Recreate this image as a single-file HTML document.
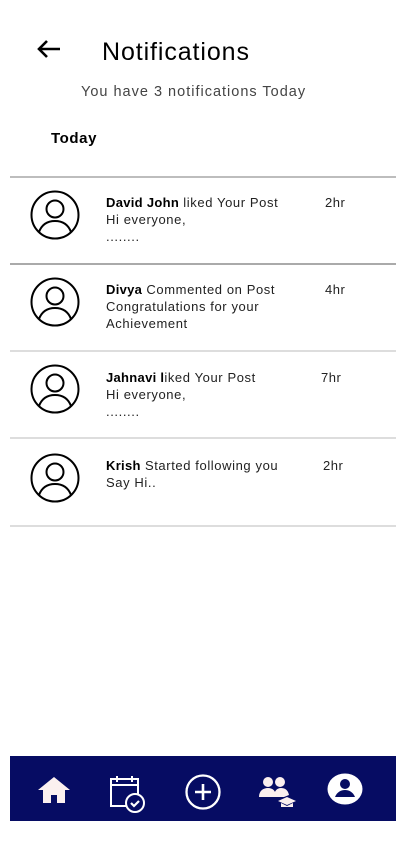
<!DOCTYPE html>
<html><head><meta charset="utf-8"><style>
*{margin:0;padding:0;box-sizing:border-box}
body{width:405px;height:849px;background:#fff;position:relative;font-family:"Liberation Sans",sans-serif;color:#111;overflow:hidden}
.a{position:absolute}
.hr{position:absolute;left:10px;width:386px;height:2px;background:#bdbdbd}
.t{position:absolute;left:106px;font-size:13px;line-height:17px;color:#222;white-space:nowrap;letter-spacing:0.6px}
.t b{color:#000;letter-spacing:0.3px}
.tm{position:absolute;font-size:13px;line-height:17px;color:#222;letter-spacing:0.5px}
.av{position:absolute;left:30px;width:50px;height:50px}
</style></head><body>
<svg class="a" style="left:36px;top:38px" width="26" height="22" viewBox="0 0 26 22"><path d="M24 11H3M11 3L3 11L11 19" fill="none" stroke="#000" stroke-width="2.6"/></svg>
<div class="a" style="left:102px;top:37px;font-size:25px;line-height:30px;color:#000;letter-spacing:0.9px">Notifications</div>
<div class="a" style="left:81px;top:83px;font-size:14.5px;line-height:18px;color:#444;letter-spacing:1px">You have 3 notifications Today</div>
<div class="a" style="left:51px;top:130px;font-size:15px;font-weight:bold;line-height:18px;color:#000;letter-spacing:0.6px">Today</div>

<div class="hr" style="top:176px"></div>
<div class="hr" style="top:263px;background:#aaa"></div>
<div class="hr" style="top:350px;background:#ddd"></div>
<div class="hr" style="top:437px;background:#ddd"></div>
<div class="hr" style="top:525px;background:#ddd"></div>

<svg class="av" style="top:190px" viewBox="0 0 50 50"><circle cx="25" cy="25" r="23.5" fill="none" stroke="#000" stroke-width="2"/><circle cx="25" cy="19" r="8.5" fill="none" stroke="#000" stroke-width="2"/><path d="M9 42C12 34 18 31 25 31S38 34 41 42" fill="none" stroke="#000" stroke-width="2"/></svg>
<svg class="av" style="top:277px" viewBox="0 0 50 50"><circle cx="25" cy="25" r="23.5" fill="none" stroke="#000" stroke-width="2"/><circle cx="25" cy="19" r="8.5" fill="none" stroke="#000" stroke-width="2"/><path d="M9 42C12 34 18 31 25 31S38 34 41 42" fill="none" stroke="#000" stroke-width="2"/></svg>
<svg class="av" style="top:364px" viewBox="0 0 50 50"><circle cx="25" cy="25" r="23.5" fill="none" stroke="#000" stroke-width="2"/><circle cx="25" cy="19" r="8.5" fill="none" stroke="#000" stroke-width="2"/><path d="M9 42C12 34 18 31 25 31S38 34 41 42" fill="none" stroke="#000" stroke-width="2"/></svg>
<svg class="av" style="top:453px" viewBox="0 0 50 50"><circle cx="25" cy="25" r="23.5" fill="none" stroke="#000" stroke-width="2"/><circle cx="25" cy="19" r="8.5" fill="none" stroke="#000" stroke-width="2"/><path d="M9 42C12 34 18 31 25 31S38 34 41 42" fill="none" stroke="#000" stroke-width="2"/></svg>

<div class="t" style="top:194px"><b>David John</b> liked Your Post<br>Hi everyone,<br>........</div>
<div class="tm" style="left:325px;top:194px">2hr</div>
<div class="t" style="top:281px"><b>Divya</b> Commented on Post<br>Congratulations for your<br>Achievement</div>
<div class="tm" style="left:325px;top:281px">4hr</div>
<div class="t" style="top:369px"><b>Jahnavi l</b>iked Your Post<br>Hi everyone,<br>........</div>
<div class="tm" style="left:321px;top:369px">7hr</div>
<div class="t" style="top:457px"><b>Krish</b> Started following you<br>Say Hi..</div>
<div class="tm" style="left:323px;top:457px">2hr</div>

<div class="a" style="left:10px;top:756px;width:386px;height:65px;background:#060c63"></div>
<svg class="a" style="left:37px;top:776px" width="34" height="28" viewBox="0 0 34 28"><path d="M17 1L1 14h5v13h8v-8h6v8h8V14h5z" fill="#fbf0ef"/></svg>
<svg class="a" style="left:108px;top:775px" width="40" height="38" viewBox="0 0 40 38"><rect x="3" y="4" width="27" height="27" fill="none" stroke="#fff" stroke-width="2"/><path d="M3 10h27M9 1v6M24 1v6" stroke="#fff" stroke-width="2"/><circle cx="27" cy="28" r="9" fill="#060c63" stroke="#fff" stroke-width="2"/><path d="M23 28l3 3 5-5" fill="none" stroke="#fff" stroke-width="2.2"/></svg>
<svg class="a" style="left:184px;top:773px" width="38" height="38" viewBox="0 0 38 38"><circle cx="19" cy="19" r="16.5" fill="none" stroke="#fff" stroke-width="2.3"/><path d="M19 11v16M11 19h16" stroke="#fff" stroke-width="2.6"/></svg>
<svg class="a" style="left:258px;top:775px" width="40" height="36" viewBox="0 0 40 36"><circle cx="10" cy="7" r="5" fill="#fbf0ef"/><circle cx="22" cy="7" r="5" fill="#fbf0ef"/><path d="M1 22c0-6 4-9 9-9s8 3 8 9z M16 22c0-6 3-9 7-9s7 2 8 7l-5 2z" fill="#fbf0ef"/><path d="M20 26l9-4 9 4-9 4z" fill="#fbf0ef"/><path d="M23 28v4h12v-4l-6 3z" fill="#fbf0ef"/></svg>
<svg class="a" style="left:327px;top:773px" width="36" height="32" viewBox="0 0 36 32"><ellipse cx="18" cy="16" rx="17.5" ry="15.5" fill="#fff"/><circle cx="18" cy="11" r="5" fill="#060c63"/><path d="M8 24c2-5 6-7 10-7s8 2 10 7z" fill="#060c63"/></svg>
</body></html>
